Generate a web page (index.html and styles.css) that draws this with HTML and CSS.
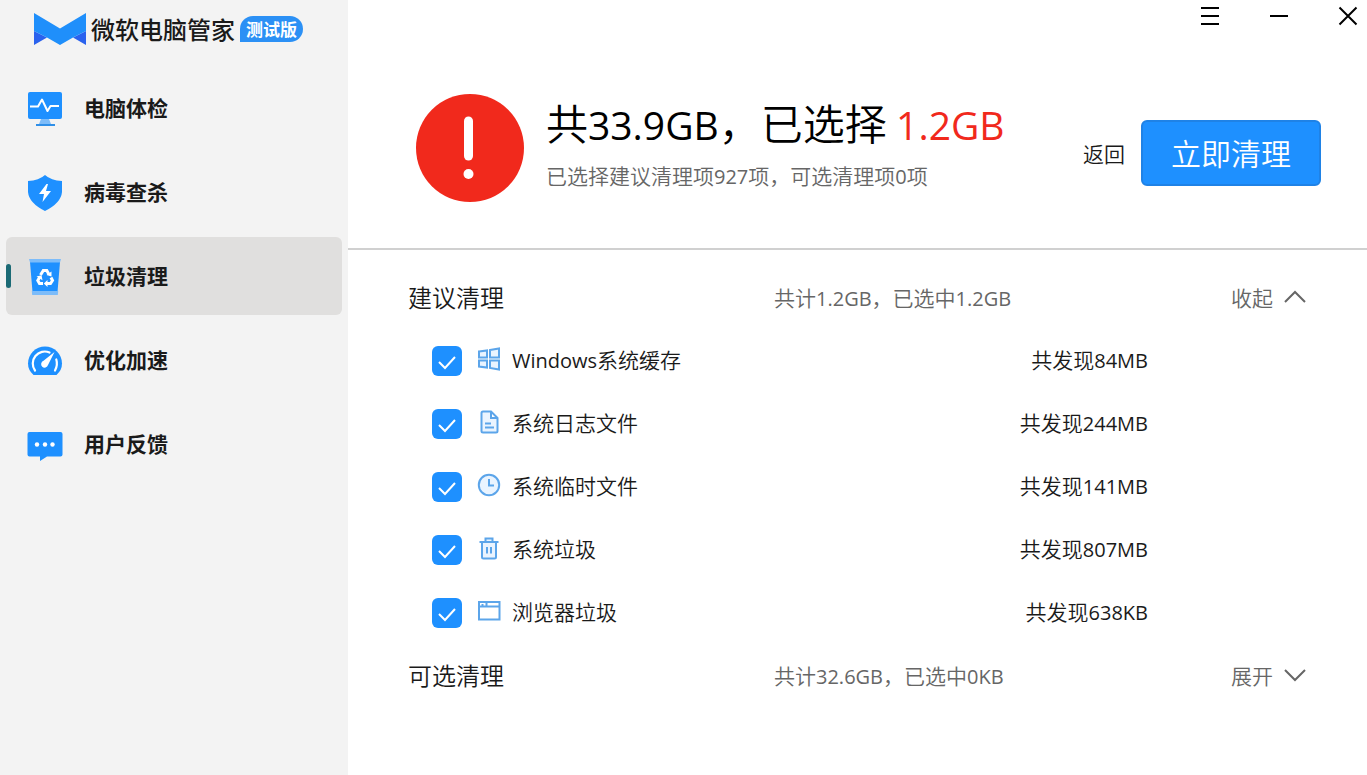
FILE: index.html
```html
<!DOCTYPE html>
<html lang="zh-CN">
<head>
<meta charset="utf-8">
<title>微软电脑管家</title>
<link rel="stylesheet" href="styles.css">
</head>
<body>
<div class="app">
  <aside class="sidebar">
    <div class="brand">
      <svg class="brand-logo" width="52" height="32" viewBox="0 0 52 32" aria-hidden="true">
        <path fill="#2a62ee" d="M0 18 13 24.500 0 32zM52 18 39 24.500 52 32z"/>
        <path fill="#1f8ffb" d="M0 0 26 15.500 52 0V18L39 24.500 52 31 39 24.500 26 32 13 24.500 0 18z"/>
      </svg>
      <span class="brand-name">微软电脑管家</span>
      <span class="brand-tag">测试版</span>
    </div>
    <nav class="menu">
      <a class="menu-item" href="#check">
        <svg width="36" height="36" viewBox="0 0 36 36" aria-hidden="true">
          <path fill="#7dbcf9" d="M14 28h8l2 5H12z"/>
          <rect x="1" y="1" width="34" height="27" rx="2" fill="#1e90ff"/>
          <rect x="9" y="33" width="19" height="2" fill="#2f8fe8"/>
          <path fill="none" stroke="#fff" stroke-width="2" stroke-linejoin="round" d="M3 15.500h8L15 8.500 20.500 20 23.500 15h8.500"/>
        </svg>
        <span class="menu-text">电脑体检</span>
      </a>
      <a class="menu-item" href="#virus">
        <svg width="36" height="36" viewBox="0 0 36 36" aria-hidden="true">
          <path fill="#1e90ff" d="M18 0Q24 5.500 35 6V17Q34 28 18 36 2 28 1 17V6Q12 5.500 18 0z"/>
          <path fill="#fff" d="M19.500 9 12 19h5l-1.500 8L24 16h-5l2-7z"/>
        </svg>
        <span class="menu-text">病毒查杀</span>
      </a>
      <a class="menu-item is-active" href="#clean" aria-current="page">
        <svg width="36" height="36" viewBox="0 0 36 36" aria-hidden="true">
          <path fill="#1e90ff" d="M3 3h30l-2.500 30h-25z"/>
          <path fill="#7dbcf9" d="M2 0h32l-1 3.500H3zM4.800 32h26.400l-.4 4H5.200z"/>
          <g fill="none" stroke="#fff" stroke-width="3">
            <path d="M13.500 16 16.300 11.500h3.500L22 15.500"/>
            <path d="M24 18.500 25.500 21.500 23.500 24.500H19.500"/>
            <path d="M16 24.500H12.500L10.800 21.500 12.800 18"/>
          </g>
          <path fill="#fff" d="M24.500 12.500v5l-5-1.500zM20.500 21v7L16.800 24.500zM9.500 17.500l5-1.200 1 5z"/>
        </svg>
        <span class="menu-text">垃圾清理</span>
      </a>
      <a class="menu-item" href="#boost">
        <svg width="36" height="36" viewBox="0 0 36 36" aria-hidden="true">
          <path fill="#1e90ff" d="M6.500 32Q1 27 1 20.500a17 17 0 0 1 34 0Q35 27 29.500 32z"/>
          <path fill="none" stroke="#fff" stroke-width="2.200" stroke-linecap="round" d="M8 27.500A12 12 0 0 1 22.500 9.500M29.300 16.500Q31 22 28 27.500"/>
          <path fill="#fff" d="M27.500 9 21 22A3.500 3.500 0 1 1 16.500 17.800z"/>
        </svg>
        <span class="menu-text">优化加速</span>
      </a>
      <a class="menu-item" href="#feedback">
        <svg width="36" height="36" viewBox="0 0 36 36" aria-hidden="true">
          <path fill="#1e90ff" d="M2.500 5h31a2 2 0 0 1 2 2v20.500a2 2 0 0 1-2 2H20L13 34v-4.500H2.500a2 2 0 0 1-2-2V7a2 2 0 0 1 2-2z"/>
          <g fill="#fff"><circle cx="10" cy="17.500" r="2.200"/><circle cx="18" cy="17.500" r="2.200"/><circle cx="25.500" cy="17.500" r="2.200"/></g>
        </svg>
        <span class="menu-text">用户反馈</span>
      </a>
    </nav>
  </aside>

  <main class="main">
    <div class="titlebar">
      <button class="win-btn" type="button" aria-label="菜单">
        <svg width="20" height="20" viewBox="0 0 20 20"><path d="M1 2h18M1 10h18M1 18h18"/></svg>
      </button>
      <button class="win-btn" type="button" aria-label="最小化">
        <svg width="20" height="20" viewBox="0 0 20 20"><path d="M1 10h18"/></svg>
      </button>
      <button class="win-btn" type="button" aria-label="关闭">
        <svg width="20" height="20" viewBox="0 0 20 20"><path d="M1.500 1.500l17 17M18.500 1.500l-17 17"/></svg>
      </button>
    </div>

    <header class="summary">
      <svg class="alert" width="108" height="108" viewBox="0 0 108 108" aria-hidden="true">
        <circle cx="54" cy="54" r="54" fill="#f1291c"/>
        <path stroke="#fff" stroke-width="9" stroke-linecap="round" d="M52.500 27v35"/>
        <circle cx="52.500" cy="80" r="5" fill="#fff"/>
      </svg>
      <div class="summary-text">
        <h1 class="summary-title">共<span class="num">33.9GB</span>，已选择 <span class="num selected">1.2GB</span></h1>
        <p class="summary-sub">已选择建议清理项<span class="num">927</span>项，可选清理项<span class="num">0</span>项</p>
      </div>
      <button class="back" type="button">返回</button>
      <button class="clean" type="button">立即清理</button>
    </header>

    <div class="groups">
      <section>
        <div class="group-head">
          <h2 class="group-title">建议清理</h2>
          <span class="group-info">共计<span class="num">1.2GB</span>，已选中<span class="num">1.2GB</span></span>
          <button class="toggle" type="button">收起
            <svg width="22" height="14" viewBox="0 0 22 14"><path d="M1 12 11 2l10 10"/></svg>
          </button>
        </div>
        <ul class="items">
          <li class="item">
            <input class="check" type="checkbox" id="c1" checked>
            <label class="item-label" for="c1">
              <svg width="24" height="24" viewBox="0 0 24 24"><path d="M2 4.500 10 3.500v7H2zM13 3 22 1.500v9h-9zM2 13.500h8v7l-8-1zM13 13.500h9v9L13 21z"/></svg>
              <span><span class="num">Windows</span>系统缓存</span>
            </label>
            <span class="item-size">共发现<span class="num">84MB</span></span>
          </li>
          <li class="item">
            <input class="check" type="checkbox" id="c2" checked>
            <label class="item-label" for="c2">
              <svg width="24" height="24" viewBox="0 0 24 24"><path d="M6 1.500h8L20.500 8v13a1.500 1.500 0 0 1-1.500 1.500H6A1.500 1.500 0 0 1 4.500 21V3A1.500 1.500 0 0 1 6 1.500zM14 1.500V8h6.500M8 13.500h6M8 17.500h9"/></svg>
              <span>系统日志文件</span>
            </label>
            <span class="item-size">共发现<span class="num">244MB</span></span>
          </li>
          <li class="item">
            <input class="check" type="checkbox" id="c3" checked>
            <label class="item-label" for="c3">
              <svg width="24" height="24" viewBox="0 0 24 24"><circle cx="12" cy="12" r="10.200"/><path d="M12 6v6.500h5"/></svg>
              <span>系统临时文件</span>
            </label>
            <span class="item-size">共发现<span class="num">141MB</span></span>
          </li>
          <li class="item">
            <input class="check" type="checkbox" id="c4" checked>
            <label class="item-label" for="c4">
              <svg width="24" height="24" viewBox="0 0 24 24"><path d="M2.500 6h19M8.500 5.500V2.500h7v3M5 6.500v14.500a1.500 1.500 0 0 0 1.500 1.500h11a1.500 1.500 0 0 0 1.500-1.500V6.500M10 11v6.500M14 11v6.500"/></svg>
              <span>系统垃圾</span>
            </label>
            <span class="item-size">共发现<span class="num">807MB</span></span>
          </li>
          <li class="item">
            <input class="check" type="checkbox" id="c5" checked>
            <label class="item-label" for="c5">
              <svg width="24" height="24" viewBox="0 0 24 24"><path fill="#fff" d="M2 3h20.500v17.500H2z"/><path d="M2 7.500h20.500M5.500 5v2M9.500 4v3"/></svg>
              <span>浏览器垃圾</span>
            </label>
            <span class="item-size">共发现<span class="num">638KB</span></span>
          </li>
        </ul>
      </section>
      <section>
        <div class="group-head">
          <h2 class="group-title">可选清理</h2>
          <span class="group-info">共计<span class="num">32.6GB</span>，已选中<span class="num">0KB</span></span>
          <button class="toggle" type="button">展开
            <svg width="22" height="14" viewBox="0 0 22 14"><path d="M1 2l10 10L21 2"/></svg>
          </button>
        </div>
      </section>
    </div>
  </main>
</div>
</body>
</html>
```

FILE: styles.css
```css
* {
  box-sizing: border-box;
}

body {
  margin: 0;
  background: #fff;
  color: #1a1a1a;
  font-family: "Noto Sans CJK SC", sans-serif;
  font-size: 21px;
  font-weight: 350;
  line-height: 30px;
}

h1, h2, p, ul {
  margin: 0;
  padding: 0;
  font-weight: inherit;
}

button {
  border: 0;
  padding: 0;
  background: none;
  color: inherit;
  font: inherit;
  cursor: pointer;
}

svg {
  display: block;
  flex: none;
}

.num {
  font-family: "Open Sans", "Noto Sans", sans-serif;
  font-size: 20px;
  font-weight: 400;
  line-height: 1;
}

.app {
  display: flex;
  min-height: 100vh;
}

.sidebar {
  flex: none;
  width: 348px;
  padding: 0 6px;
  background: #f3f3f3;
}

.brand {
  display: flex;
  align-items: center;
  height: 58px;
  padding-left: 28px;
}

.brand-name {
  margin-left: 5px;
  font-size: 24px;
  font-weight: 500;
}

.brand-tag {
  margin-left: 5px;
  padding: 0 6px;
  border-radius: 13px 13px 13px 0;
  background: #2b90f5;
  color: #fff;
  font-size: 17px;
  font-weight: 700;
  line-height: 26px;
}

.menu {
  display: grid;
  gap: 6px;
  padding-top: 11px;
}

.menu-item {
  position: relative;
  display: flex;
  align-items: center;
  gap: 21px;
  height: 78px;
  padding-left: 21px;
  border-radius: 6px;
  color: #1a1a1a;
  font-weight: 700;
  text-decoration: none;
}

.menu-item svg {
  margin-top: 2px;
}

.menu-text {
  padding-bottom: 2px;
}

.menu-item.is-active {
  background: #e0dfde;
}

.menu-item.is-active::before {
  content: "";
  position: absolute;
  left: 0;
  top: 27px;
  width: 5px;
  height: 24px;
  border-radius: 3px;
  background: #1b6a75;
}

.main {
  flex: 1;
  min-width: 0;
}

.titlebar {
  display: flex;
  justify-content: flex-end;
  gap: 49px;
  height: 32px;
  padding-right: 9px;
}

.win-btn svg {
  fill: none;
  stroke: #000;
  stroke-width: 2;
}

.summary {
  display: flex;
  align-items: center;
  padding: 62px 46px 46px 68px;
  border-bottom: 2px solid #d0d0d0;
}

.summary-text {
  flex: 1;
  margin-left: 22px;
  padding-bottom: 12px;
}

.summary-title {
  color: #000;
  font-size: 42px;
  line-height: 56px;
}

.summary-title .num {
  font-size: 39px;
}

.summary-title .selected {
  color: #f1291c;
}

.summary-sub {
  margin-top: 10px;
  color: #666;
}

.back {
  margin-top: 10px;
}

.clean {
  width: 180px;
  height: 66px;
  margin: 10px 0 0 16px;
  padding-bottom: 3px;
  border: 2px solid #1f82e6;
  border-radius: 6px;
  background: #1e90ff;
  color: #fff;
  font-size: 30px;
}

.groups {
  padding: 16px 61px 16px 60px;
}

.group-head {
  display: grid;
  grid-template-columns: 366px 1fr auto;
  align-items: center;
  height: 63px;
  padding-bottom: 2px;
}

.group-title {
  font-size: 24px;
}

.group-info,
.toggle {
  color: #666;
}

.toggle {
  display: flex;
  align-items: center;
  gap: 11px;
}

.toggle svg {
  fill: none;
  stroke: #666;
  stroke-width: 2;
}

.items {
  list-style: none;
}

.item {
  display: flex;
  align-items: center;
  height: 63px;
  padding: 0 158px 0 24px;
}

.check {
  appearance: none;
  flex: none;
  width: 30px;
  height: 30px;
  margin: 0;
  border-radius: 6px;
  background: #fff;
  box-shadow: inset 0 0 0 1px #888;
}

.check:checked {
  background: #1e90ff url("data:image/svg+xml,%3Csvg xmlns='http://www.w3.org/2000/svg' viewBox='0 0 30 30'%3E%3Cpath d='M7 16l6 6 10-11' fill='none' stroke='white' stroke-width='2'/%3E%3C/svg%3E");
  box-shadow: none;
}

.item-label {
  display: flex;
  align-items: center;
  gap: 11px;
  margin-left: 15px;
  padding-bottom: 3px;
}

.item-label svg {
  fill: #eaf4ff;
  stroke: #5ca5ea;
  stroke-width: 2;
}

.item-size {
  margin-left: auto;
  padding-bottom: 3px;
}
```
